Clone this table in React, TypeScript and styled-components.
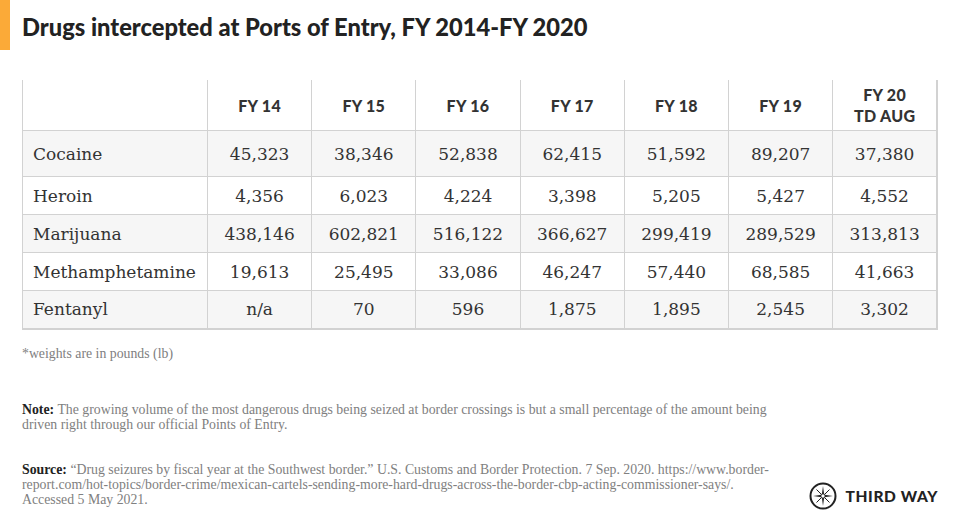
import styled, { createGlobalStyle } from "styled-components";

const GlobalStyle = createGlobalStyle`
  html, body {
    margin: 0;
    padding: 0;
    background: #ffffff;
  }
  body {
    font-family: "Lato", "Liberation Sans", sans-serif;
  }
`;

const Page = styled.div`
  width: 960px;
  height: 522px;
  display: flex;
  flex-direction: column;
  background: #fff;
  overflow: hidden;
`;

const Header = styled.div`
  display: flex;
  align-items: center;
  height: 50px;
`;

const AccentBar = styled.div`
  width: 10px;
  height: 50px;
  background: #fbaa38;
`;

const Title = styled.h1`
  margin: 4px 0 0 12px;
  font-family: "Lato", sans-serif;
  font-weight: 900;
  font-size: 23.7px;
  color: #222;
`;

const Table = styled.table`
  margin: 30px 0 0 22px;
  width: 916px;
  border-collapse: collapse;
  table-layout: fixed;
  border-right: 2px solid #d2d2d2;
  border-bottom: 2px solid #d2d2d2;
`;

const HeadCell = styled.th`
  height: 50px;
  padding: 0;
  border-left: 1px solid #d2d2d2;
  border-bottom: 1px solid #d2d2d2;
  font-family: "Lato", sans-serif;
  font-weight: 900;
  font-size: 16px;
  line-height: 21px;
  letter-spacing: 0.3px;
  color: #333;
  text-align: center;
  background: #fff;
`;

const Row = styled.tr<{ $shade: boolean; $tall?: boolean }>`
  height: ${(p) => (p.$tall ? 46 : 38)}px;
  background: ${(p) => (p.$shade ? "#f6f6f6" : "#ffffff")};
`;

const LabelCell = styled.td`
  padding: 0 0 0 10px;
  border-left: 1px solid #d2d2d2;
  border-bottom: 1px solid #d2d2d2;
  font-family: "DejaVu Serif", serif;
  font-size: 17px;
  color: #333;
  text-align: left;
`;

const ValueCell = styled.td`
  padding: 0;
  border-left: 1px solid #d2d2d2;
  border-bottom: 1px solid #d2d2d2;
  font-family: "DejaVu Serif", serif;
  font-size: 17px;
  color: #333;
  text-align: center;
`;

const SmallText = styled.p<{ $top: number }>`
  margin: ${(p) => p.$top}px 0 0 22px;
  font-family: "Liberation Serif", serif;
  font-size: 13.8px;
  line-height: 15px;
  color: #808080;
  width: 770px;
`;

const Bold = styled.b`
  color: #222;
  font-weight: 700;
`;

const Footer = styled.div`
  display: flex;
  align-items: flex-end;
  justify-content: space-between;
  margin-top: 30px;
  padding-right: 22px;
`;

const Logo = styled.div`
  display: flex;
  align-items: center;
  gap: 9px;
  margin-bottom: -3px;
`;

const LogoText = styled.span`
  font-family: "Lato", sans-serif;
  font-weight: 900;
  font-size: 15.5px;
  letter-spacing: 0.6px;
  color: #222;
`;

const CompassIcon = () => (
  <svg width="28" height="28" viewBox="0 0 28 28">
    <circle cx="14" cy="14" r="12.5" fill="none" stroke="#222" strokeWidth="2" />
    <path
      d="M14 4 L15.2 12.8 L24 14 L15.2 15.2 L14 24 L12.8 15.2 L4 14 L12.8 12.8 Z"
      fill="#222"
    />
    <path
      d="M7.5 7.5 L14 14 M20.5 7.5 L14 14 M7.5 20.5 L14 14 M20.5 20.5 L14 14"
      stroke="#222"
      strokeWidth="1"
    />
    <circle cx="14" cy="14" r="2.2" fill="#fff" stroke="#222" strokeWidth="1" />
  </svg>
);

const columns = ["FY 14", "FY 15", "FY 16", "FY 17", "FY 18", "FY 19"];

const rows: [string, string[]][] = [
  ["Cocaine", ["45,323", "38,346", "52,838", "62,415", "51,592", "89,207", "37,380"]],
  ["Heroin", ["4,356", "6,023", "4,224", "3,398", "5,205", "5,427", "4,552"]],
  ["Marijuana", ["438,146", "602,821", "516,122", "366,627", "299,419", "289,529", "313,813"]],
  ["Methamphetamine", ["19,613", "25,495", "33,086", "46,247", "57,440", "68,585", "41,663"]],
  ["Fentanyl", ["n/a", "70", "596", "1,875", "1,895", "2,545", "3,302"]],
];

export default function App() {
  return (
    <Page>
      <GlobalStyle />
      <Header>
        <AccentBar />
        <Title>Drugs intercepted at Ports of Entry, FY 2014-FY 2020</Title>
      </Header>
      <Table>
        <colgroup>
          <col style={{ width: 185 }} />
        </colgroup>
        <thead>
          <tr>
            <HeadCell />
            {columns.map((c) => (
              <HeadCell key={c}>{c}</HeadCell>
            ))}
            <HeadCell>
              FY 20
              <br />
              TD AUG
            </HeadCell>
          </tr>
        </thead>
        <tbody>
          {rows.map(([name, values], i) => (
            <Row key={name} $shade={i % 2 === 0} $tall={i === 0}>
              <LabelCell>{name}</LabelCell>
              {values.map((v, j) => (
                <ValueCell key={j}>{v}</ValueCell>
              ))}
            </Row>
          ))}
        </tbody>
      </Table>
      <SmallText $top={16}>*weights are in pounds (lb)</SmallText>
      <SmallText $top={41}>
        <Bold>Note:</Bold> The growing volume of the most dangerous drugs being
        seized at border crossings is but a small percentage of the amount being
        <br />
        driven right through our official Points of Entry.
      </SmallText>
      <Footer>
        <SmallText $top={0}>
          <Bold>Source:</Bold> “Drug seizures by fiscal year at the Southwest
          border.” U.S. Customs and Border Protection. 7 Sep. 2020. https://www.border-
          <br />
          report.com/hot-topics/border-crime/mexican-cartels-sending-more-hard-drugs-across-the-border-cbp-acting-commissioner-says/.
          <br />
          Accessed 5 May 2021.
        </SmallText>
        <Logo>
          <CompassIcon />
          <LogoText>THIRD WAY</LogoText>
        </Logo>
      </Footer>
    </Page>
  );
}
